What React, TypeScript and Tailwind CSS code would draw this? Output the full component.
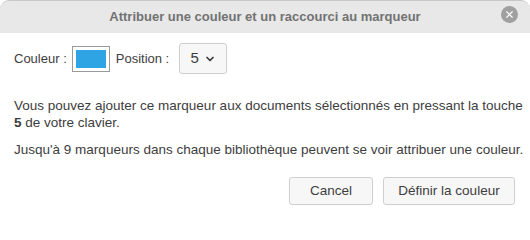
import { ChevronDown, X } from "lucide-react";

export default function App() {
  return (
    <div className="h-[217px] w-[530px] overflow-hidden bg-white font-['Liberation_Sans',sans-serif] text-[13.5px] text-[#3d3d3d]">
      <div className="relative flex h-[33px] items-center justify-center rounded-t-[9px] border-t border-[#c8c8c8] bg-[#e8e8e8]">
        <span className="text-[13px] font-bold text-[#727272]">Attribuer une couleur et un raccourci au marqueur</span>
        <button
          type="button"
          aria-label="Fermer"
          className="absolute right-[12px] top-[5px] flex size-[17px] items-center justify-center rounded-full bg-[#a0a0a0] text-white"
        >
          <X className="size-[11px]" strokeWidth={2.5} />
        </button>
      </div>

      <div className="flex items-center px-[14px] pt-[10px] text-[13px]">
        <span>Couleur :</span>
        <span className="ml-[5px] flex h-[26px] w-[38px] items-center justify-center border border-[#9a9a9a] bg-white">
          <span className="h-[18px] w-[30px] bg-[#2fa4e4]" />
        </span>
        <span className="ml-[6px]">Position :</span>
        <button
          type="button"
          className="ml-[10px] flex h-[31px] w-[48px] items-center justify-center gap-[5px] rounded-[3px] border border-[#cfcfcf] bg-[#f7f7f7] text-[15px]"
        >
          5
          <ChevronDown className="size-[12px]" strokeWidth={3.5} />
        </button>
      </div>

      <div className="space-y-[10px] whitespace-nowrap px-[14px] pt-[23px] leading-[17px]">
        <p>
          Vous pouvez ajouter ce marqueur aux documents sélectionnés en pressant la touche
          <br />
          <b>5</b> de votre clavier.
        </p>
        <p>Jusqu'à 9 marqueurs dans chaque bibliothèque peuvent se voir attribuer une couleur.</p>
      </div>

      <div className="flex justify-end gap-[10px] pr-[15px] pt-[19px]">
        <button type="button" className="h-[28px] w-[84px] rounded-[3px] border border-[#cfcfcf] bg-[#f7f7f7]">
          Cancel
        </button>
        <button type="button" className="h-[28px] w-[132px] rounded-[3px] border border-[#cfcfcf] bg-[#f7f7f7]">
          Définir la couleur
        </button>
      </div>
    </div>
  );
}
